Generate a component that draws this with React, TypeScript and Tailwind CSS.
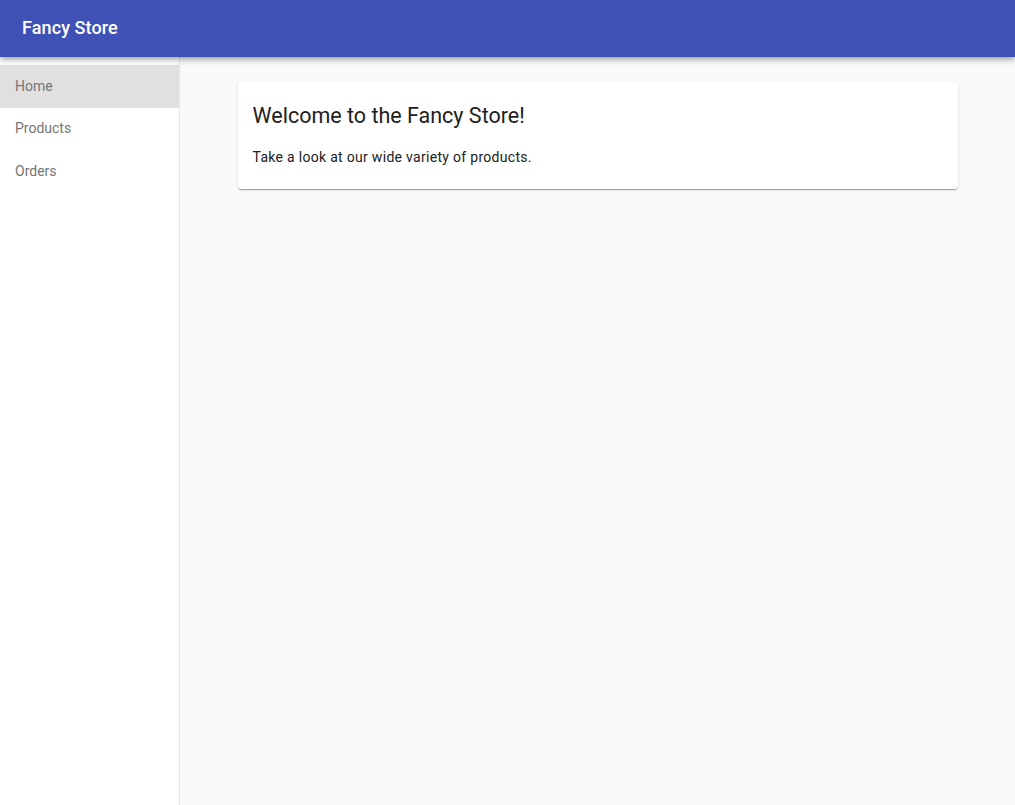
import React from 'react';

const navItems = ['Home', 'Products', 'Orders'];

export default function App() {
  const active = 'Home';

  return (
    <div className="h-[805px] flex flex-col bg-[#fafafa] font-['Roboto',sans-serif] overflow-hidden">
      {/* top toolbar */}
      <header className="relative z-10 h-[57px] shrink-0 bg-[#3f51b5] flex items-center px-[22px] pb-[2px] shadow-[0_2px_4px_-1px_rgba(0,0,0,0.2),0_4px_5px_0_rgba(0,0,0,0.14),0_1px_10px_0_rgba(0,0,0,0.12)]">
        <h1 className="text-white text-[18px] font-medium tracking-[0.1px]">Fancy Store</h1>
      </header>

      <div className="flex flex-1 min-h-0">
        {/* side nav */}
        <nav className="w-[180px] shrink-0 bg-white border-r border-[#e6e6e6] pt-[8px]">
          {navItems.map(item => (
            <div
              key={item}
              className={`h-[42.5px] flex items-center px-[15px] text-[14px] text-[#757575] ${item === active ? 'bg-[#e0e0e0]' : ''}`}
            >
              {item}
            </div>
          ))}
        </nav>

        {/* content */}
        <main className="flex-1 pt-[25px] flex justify-center">
          <div className="w-[720px] h-[107px] bg-white rounded-[4px] px-[15px] pt-[18px] shadow-[0_2px_1px_-1px_rgba(0,0,0,0.2),0_1px_1px_0_rgba(0,0,0,0.14),0_1px_3px_0_rgba(0,0,0,0.12)]">
            <h2 className="text-[21.5px] text-[#212121] leading-[32px]">Welcome to the Fancy Store!</h2>
            <p className="mt-[15px] text-[14px] text-[#212121] tracking-[0.3px]">Take a look at our wide variety of products.</p>
          </div>
        </main>
      </div>
    </div>
  );
}
